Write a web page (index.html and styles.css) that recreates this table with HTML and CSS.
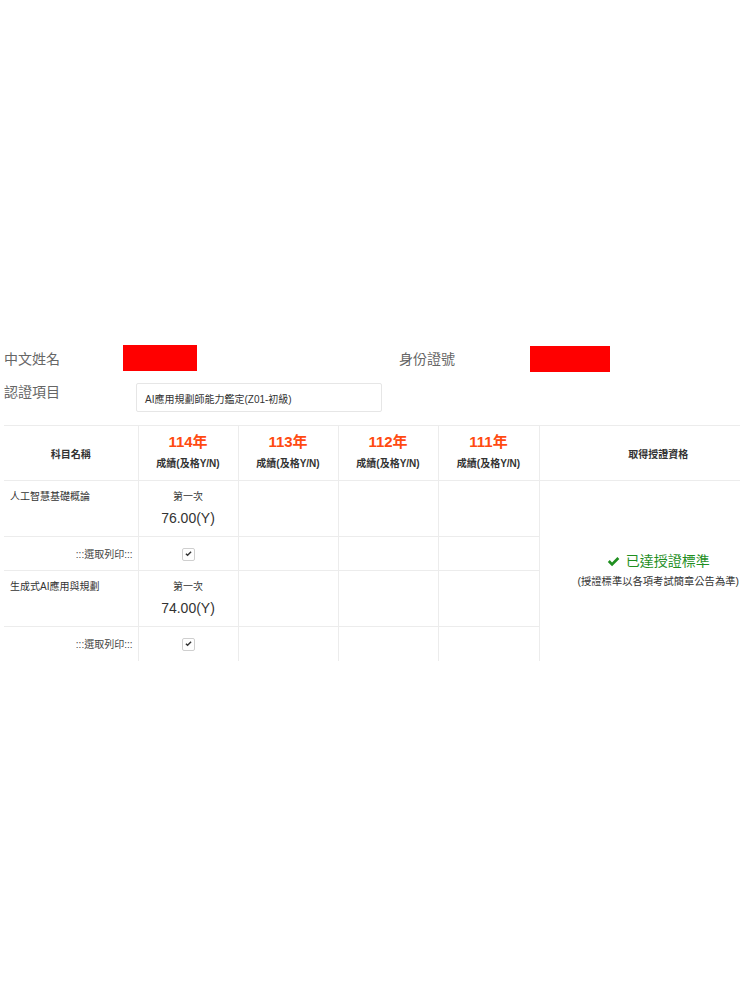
FILE: index.html
```html
<!DOCTYPE html>
<html lang="zh-Hant">
<head>
<meta charset="utf-8">
<title>成績查詢</title>
<link rel="stylesheet" href="styles.css">
</head>
<body>
<main class="page">
  <section class="info">
    <div class="info-row row-a">
      <span class="label">中文姓名</span>
      <span class="redact redact-name"></span>
      <span class="label">身份證號</span>
      <span class="redact redact-id"></span>
    </div>
    <div class="info-row row-b">
      <span class="label">認證項目</span>
      <div class="field">AI應用規劃師能力鑑定(Z01-初級)</div>
    </div>
  </section>
  <div class="table-wrap">
  <table class="scores">
    <colgroup>
      <col class="c-name"><col class="c-year"><col class="c-year"><col class="c-year"><col class="c-year2"><col class="c-result">
    </colgroup>
    <thead>
      <tr class="head">
        <th>科目名稱</th>
        <th><div class="year">114年</div><div class="sub">成績(及格Y/N)</div></th>
        <th><div class="year">113年</div><div class="sub">成績(及格Y/N)</div></th>
        <th><div class="year">112年</div><div class="sub">成績(及格Y/N)</div></th>
        <th><div class="year">111年</div><div class="sub">成績(及格Y/N)</div></th>
        <th>取得授證資格</th>
      </tr>
    </thead>
    <tbody>
      <tr class="subject">
        <td class="name">人工智慧基礎概論</td>
        <td class="score"><div class="times">第一次</div><div class="val">76.00(Y)</div></td>
        <td></td><td></td><td></td>
        <td class="result" rowspan="4">
          <div class="ok"><svg class="ok-icon" viewBox="0 0 16 13" width="13" height="11"><path d="M1 7.2 L3.4 4.8 L6.2 7.6 L12.8 1 L15.2 3.4 L6.2 12.4 Z" fill="#1f8f1f"/></svg>已達授證標準</div>
          <div class="note">(授證標準以各項考試簡章公告為準)</div>
        </td>
      </tr>
      <tr class="pick">
        <td class="pick-label">:::選取列印:::</td>
        <td class="box-cell"><span class="box"><svg viewBox="0 0 10 8" width="7" height="6"><path d="M0.6 4.2 L2 2.8 L3.7 4.5 L8 0.2 L9.4 1.6 L3.7 7.3 Z" fill="#333"/></svg></span></td>
        <td></td><td></td><td></td>
      </tr>
      <tr class="subject">
        <td class="name">生成式AI應用與規劃</td>
        <td class="score"><div class="times">第一次</div><div class="val">74.00(Y)</div></td>
        <td></td><td></td><td></td>
      </tr>
      <tr class="pick last">
        <td class="pick-label">:::選取列印:::</td>
        <td class="box-cell"><span class="box"><svg viewBox="0 0 10 8" width="7" height="6"><path d="M0.6 4.2 L2 2.8 L3.7 4.5 L8 0.2 L9.4 1.6 L3.7 7.3 Z" fill="#333"/></svg></span></td>
        <td></td><td></td><td></td>
      </tr>
    </tbody>
  </table>
  </div>
</main>
</body>
</html>
```
FILE: styles.css
```css
* { box-sizing: border-box; }
html, body { margin: 0; padding: 0; background: #fff; overflow: hidden; }
body {
  font-family: "Liberation Sans", Arial, "Noto Sans CJK TC", sans-serif;
  color: #333;
}
.page { padding-top: 344px; padding-left: 4px; }

.info-row { display: grid; }
.row-a { grid-template-columns: 119px 276px 131px 80px; height: 27px; align-items: center; }
.row-b { grid-template-columns: 132px 246px; height: 29px; margin-top: 12px; align-items: start; }
.label { font-size: 14px; line-height: 18px; color: #666; }
.row-a .label { margin-top: 1px; }
.redact { display: block; background: #ff0000; height: 26px; }
.redact-name { width: 74px; }
.redact-id { width: 80px; margin-top: 2px; }
.field {
  height: 29px;
  border: 1px solid #e6e6e6;
  border-radius: 2px;
  font-size: 10px;
  color: #333;
  padding: 7px 0 0 8px;
}

.table-wrap { margin-top: 13px; height: 236px; width: 736px; overflow: hidden; }
.scores {
  border-collapse: collapse;
  table-layout: fixed;
  width: 773px;
  font-size: 10px;
}
.c-name { width: 134px; }
.c-year { width: 100px; }
.c-year2 { width: 101px; }
.c-result { width: 238px; }
.scores th, .scores td {
  border: 1px solid #ececec;
  padding: 0;
}
.scores tr > :first-child { border-left: none; }
.scores tr > :last-child { border-right: none; }
.head { height: 55px; }
.head th { font-weight: bold; color: #333; text-align: center; vertical-align: middle; }
.year { color: #ff4a10; font-size: 15px; font-weight: bold; line-height: 18px; margin-top: -2px; }
.sub { font-size: 10px; line-height: 14px; margin-top: 6px; }

.subject { height: 56px; }
.subject td { vertical-align: top; }
.name { padding: 7px 0 0 6px !important; color: #333; }
.score { text-align: center; padding-top: 9px !important; }
.times { font-size: 10px; line-height: 14px; color: #333; }
.val { font-size: 14px; line-height: 18px; margin-top: 5px; color: #333; }

.pick { height: 34px; }
.pick td { vertical-align: middle; }
.pick.last td { border-bottom: none; }
.pick-label { text-align: right; padding-right: 5px !important; color: #444; }
.box-cell { text-align: center; }
.box {
  display: inline-flex;
  align-items: center;
  justify-content: center;
  width: 13px;
  height: 13px;
  border: 1px solid #cfcfcf;
  border-radius: 2px;
  vertical-align: middle;
  margin-top: 1px;
}

.subject td.result { text-align: center; vertical-align: middle; border-bottom: none; }
.ok { color: #1f8f1f; font-size: 14px; line-height: 18px; display: flex; align-items: center; justify-content: center; gap: 6px; }
.note { font-size: 10.3px; line-height: 14px; color: #333; margin-top: 5px; }
```
